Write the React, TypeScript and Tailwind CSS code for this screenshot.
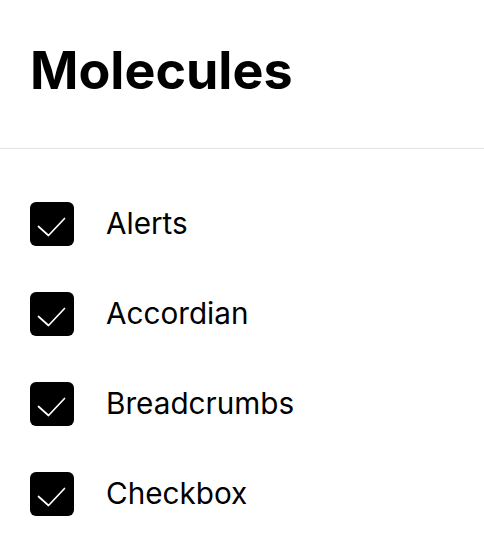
import React from "react";

const items = ["Alerts", "Accordian", "Breadcrumbs", "Checkbox"];

const CheckIcon = () => (
  <svg className="block" width="44" height="44" viewBox="0 0 44 44" fill="none">
    <path
      d="M8.5 24.5 L18.5 33.5 L34.5 16.5"
      stroke="white"
      strokeWidth="1.7"
      strokeLinecap="round"
      strokeLinejoin="round"
    />
  </svg>
);

export default function App() {
  return (
    <div className="min-h-screen bg-white text-black font-['Inter',sans-serif]">
      <div className="px-[30px] pt-[45px] pb-[51px]">
        <h1 className="text-[52px] leading-[52px] font-bold">Molecules</h1>
      </div>
      <div className="h-px bg-[#e2e2e2]" />
      <ul className="flex flex-col gap-[46px] px-[30px] pt-[53px]">
        {items.map((item) => (
          <li key={item} className="flex items-center gap-8">
            <div className="w-11 h-11 shrink-0 rounded-md bg-black">
              <CheckIcon />
            </div>
            <span className="text-[29.7px] leading-none">{item}</span>
          </li>
        ))}
      </ul>
    </div>
  );
}
